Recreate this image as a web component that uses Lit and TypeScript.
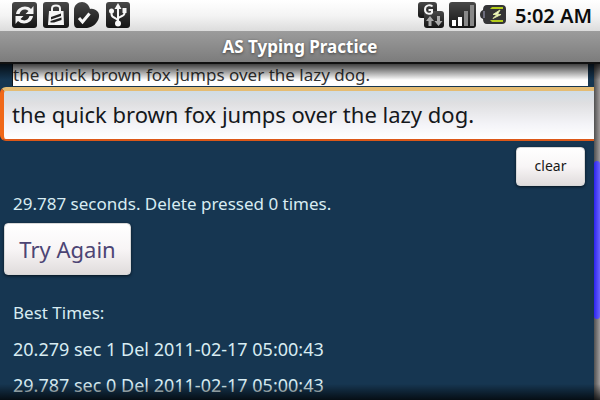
import { LitElement, html, svg, css } from "lit";
import { customElement, property, state } from "lit/decorators.js";

type IconName = "sync" | "market" | "check" | "usb" | "data" | "signal" | "battery";

const icons: Record<IconName, unknown> = {
  sync: svg`
    <rect width="25" height="26" rx="3" fill="url(#g)"/>
    <path d="M4 12C5 5 14 2 19 7L21.500 4V12H13.500L16.500 9C12.500 6 8.500 8 7.500 12Z" fill="#f4f4f4"/>
    <path d="M21 14C20 21 11 24 6 19L3.500 22V14H11.500L8.500 17C12.500 20 16.500 18 17.500 14Z" fill="#f4f4f4"/>`,
  market: svg`
    <rect width="26" height="26" rx="3" fill="url(#g)"/>
    <path d="M9 10V6.500C9 2.500 17 2.500 17 6.500V10" fill="none" stroke="#f4f4f4" stroke-width="2"/>
    <path d="M6 9H20.500L21 23H5Z" fill="#f4f4f4"/>
    <path d="M8 15L18 11.500V14L8 17.500ZM7.500 19L18.500 15.500V18L11 20.500H7.500Z" fill="#222"/>`,
  check: svg`
    <path d="M8 0C12 0 15 3 16 7C21 6 26 10 25 15C24 21 19 25 13 26H4C1 26 0 24 0 21V8C0 3 4 0 8 0Z" fill="url(#g)"/>
    <path d="M5 16L8.500 20L15.500 11.500" fill="none" stroke="#f8f8f8" stroke-width="3"/>`,
  usb: svg`
    <rect x="1" width="24" height="26" rx="3" fill="url(#g)"/>
    <path d="M13 22V5M13 19C12.500 15 6.500 17 6.500 12V9M13 17C13.500 14 19.500 15 19.500 11V7" fill="none" stroke="#f8f8f8" stroke-width="2"/>
    <path d="M13 1L16.500 7H9.500Z" fill="#f8f8f8"/>
    <circle cx="13" cy="21.500" r="3" fill="#f8f8f8"/>
    <circle cx="6.500" cy="9" r="2.500" fill="#f8f8f8"/>
    <rect x="17.500" y="6" width="4" height="5" fill="#f8f8f8"/>`,
  data: svg`
    <rect x="0" y="0" width="19" height="16" rx="3" fill="url(#g)"/>
    <rect x="6" y="9" width="20" height="17" rx="3" fill="url(#g)"/>
    <path d="M14.500 4.500C13 2.500 7 2.500 7 7.500C7 12.500 13 12.500 14 10.500V8H10.500" fill="none" stroke="#f4f4f4" stroke-width="2"/>
    <path d="M12 14L16 19H13.500V24H10.500V19H8ZM20.500 24L16.500 19H19V14H22V19H24.500Z" fill="#aaa"/>`,
  signal: svg`
    <rect width="27" height="26" rx="3" fill="url(#g)"/>
    <rect x="3" y="18" width="4" height="6" fill="#fff"/>
    <rect x="9" y="15" width="4" height="9" fill="#fff"/>
    <rect x="15" y="9" width="4" height="15" fill="#888"/>
    <rect x="21" y="3" width="4" height="21" fill="#888"/>`,
  battery: svg`
    <path d="M7 3H22Q26 3 26 7V18Q26 22 22 22H7Q3 22 3 17Q0 16 0 12.500Q0 9 3 8Q3 3 7 3Z" fill="#343436"/>
    <path d="M12 5H23V7H10ZM10 18H23V20H12Z" fill="#b4cc1c"/>
    <path d="M3 9H5V16H3Z" fill="#6c6c7c"/>
    <path d="M20 8L13 12.500H17L13 16.500L21 12.500H17.500Z" fill="#f4f8d8" stroke="#dce8a0"/>`,
};

@customElement("status-icon")
export class StatusIcon extends LitElement {
  @property() name: IconName = "sync";

  static styles = css`
    :host { display: block; width: 27px; height: 26px; }
    svg { display: block; }
  `;

  render() {
    return html`<svg width="27" height="26" viewBox="0 0 27 26" aria-hidden="true">
      <defs>
        <linearGradient id="g" x1="0" y1="0" x2="0" y2="1">
          <stop offset="0" stop-color="#484848"/>
          <stop offset="1" stop-color="#141414"/>
        </linearGradient>
      </defs>
      ${icons[this.name]}
    </svg>`;
  }
}

@customElement("app-root")
export class AppRoot extends LitElement {
  @state() private typed = "the quick brown fox jumps over the lazy dog.";

  private phrase = "the quick brown fox jumps over the lazy dog.";
  private best = [
    "20.279 sec 1 Del 2011-02-17 05:00:43",
    "29.787 sec 0 Del 2011-02-17 05:00:43",
  ];

  static styles = css`
    :host {
      display: flex;
      flex-direction: column;
      height: 100vh;
      overflow: hidden;
      background: #163651;
      color: #d8ecf2;
      font-family: "Noto Sans", "Open Sans", sans-serif;
      font-size: 17px;
      line-height: 24px;
    }
    * { box-sizing: border-box; }
    .status {
      flex: none;
      display: flex;
      justify-content: space-between;
      height: 31px;
      padding: 2px 8px 0 12px;
      background: linear-gradient(#ffffff, #f4f4f4 50%, #dcdcdc);
      color: #0c0c0c;
    }
    .icons { display: flex; gap: 4px; }
    .clock { margin-left: 4px; line-height: 28px; font-size: 20px; font-weight: 600; }
    .title {
      flex: none;
      height: 33px;
      margin: 0;
      border-bottom: 2px solid #101010;
      background: linear-gradient(#9c9c9c, #7c7c7c);
      color: #ffffff;
      font-size: 17px;
      font-weight: 700;
      line-height: 31px;
      text-align: center;
      text-shadow: 0 1px 3px #404040;
    }
    .view {
      position: relative;
      flex: 1;
      min-height: 0;
      display: grid;
      grid-template-columns: minmax(0, 1fr) 6px;
      overflow: hidden;
    }
    .fade {
      position: absolute;
      left: 0;
      right: 0;
      height: 16px;
      pointer-events: none;
    }
    .top { top: 0; background: linear-gradient(rgba(0, 0, 0, 0.75), rgba(0, 0, 0, 0)); }
    .bottom { bottom: 0; background: linear-gradient(rgba(0, 0, 0, 0), rgba(0, 0, 0, 0.75)); }
    .page { display: flex; flex-direction: column; min-width: 0; }
    .phrase {
      flex: none;
      height: 22px;
      margin: 0 6px 0 12px;
      border-left: 1px solid #101820;
      background: #ffffff;
      color: #333333;
      line-height: 22px;
    }
    .entry {
      flex: none;
      width: 100%;
      height: 54px;
      margin-top: 1px;
      padding: 0 0 2px 8px;
      border: solid;
      border-width: 4px 0 2px 4px;
      border-color: #e4bc74 #e4bc74 #dc5818 #f06818;
      border-radius: 6px 0 0 6px;
      outline: none;
      background: linear-gradient(#d0dce4, #dfdfe1 25%, #f4f4f8 70%, #ffffff);
      color: #15181c;
      font: inherit;
      font-size: 22px;
    }
    button {
      border: 1px solid #d8d8d8;
      border-radius: 4px;
      background: linear-gradient(#ffffff, #f8f5f6 50%, #e0dcdc);
      box-shadow: 0 1px 3px #081420;
      font: inherit;
    }
    .clear {
      flex: none;
      align-self: flex-end;
      width: 69px;
      height: 39px;
      margin: 6px 9px 0 0;
      padding: 0 0 2px;
      color: #181818;
      font-size: 14px;
    }
    .line { flex: none; margin: 0 13px; line-height: 36px; }
    .again {
      flex: none;
      align-self: flex-start;
      width: 127px;
      height: 52px;
      margin: 1px 4px 20px;
      padding: 0;
      color: #4c4474;
      font-size: 22px;
    }
    .best { margin: 0; padding: 0; list-style: none; font-size: 18px; }
    .track {
      display: grid;
      grid-template-rows: 96fr 157fr 83fr;
      background: linear-gradient(90deg, #505050, #a09c9c);
    }
    .thumb {
      grid-row: 2;
      border-radius: 3px;
      background: linear-gradient(90deg, #2c24f0, #6c64ff);
    }
  `;

  private onInput(e: Event) {
    this.typed = (e.target as HTMLInputElement).value;
  }

  private reset() {
    this.typed = "";
  }

  render() {
    return html`
      <header class="status">
        <div class="icons">
          ${(["sync", "market", "check", "usb"] as IconName[]).map((n) => html`<status-icon .name=${n}></status-icon>`)}
        </div>
        <div class="icons">
          ${(["data", "signal", "battery"] as IconName[]).map((n) => html`<status-icon .name=${n}></status-icon>`)}
          <time class="clock">5:02 AM</time>
        </div>
      </header>
      <h1 class="title">AS Typing Practice</h1>
      <div class="view">
        <main class="page">
          <label class="phrase" for="entry">${this.phrase}</label>
          <input class="entry" id="entry" type="text" .value=${this.typed} @input=${this.onInput}>
          <button class="clear" type="button" @click=${this.reset}>clear</button>
          <p class="line">29.787 seconds. Delete pressed 0 times.</p>
          <button class="again" type="button" @click=${this.reset}>Try Again</button>
          <p class="line">Best Times:</p>
          <ul class="best">
            ${this.best.map((b) => html`<li class="line">${b}</li>`)}
          </ul>
        </main>
        <div class="track"><div class="thumb"></div></div>
        <div class="fade top"></div>
        <div class="fade bottom"></div>
      </div>
    `;
  }
}
